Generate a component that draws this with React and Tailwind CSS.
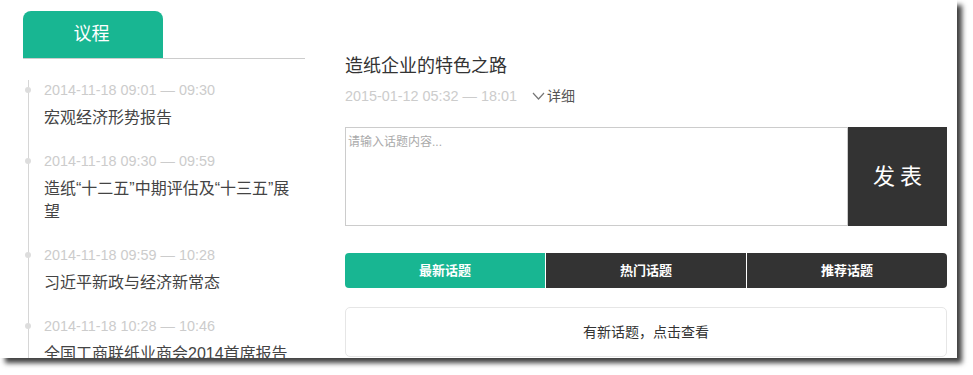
import React from "react";

const items = [
  { date: "2014-11-18 09:01 — 09:30", title: "宏观经济形势报告" },
  { date: "2014-11-18 09:30 — 09:59", title: "造纸“十二五”中期评估及“十三五”展望" },
  { date: "2014-11-18 09:59 — 10:28", title: "习近平新政与经济新常态" },
  { date: "2014-11-18 10:28 — 10:46", title: "全国工商联纸业商会2014首席报告" },
];

export default function App() {
  return (
    <div className="w-[973px] h-[375px] bg-white font-['Liberation_Sans','Noto_Sans_CJK_SC',sans-serif]">
      <div className="w-[957px] h-[358px] bg-white overflow-hidden flex shadow-[5px_5px_5px_rgba(0,0,0,0.75)]">
        {/* Left column */}
        <div className="ml-[23px] w-[282px] pt-[11px] shrink-0">
          <div className="border-b border-[#cccccc] h-[48px]">
            <div className="w-[140px] h-[47px] bg-[#18b692] rounded-t-[8px] flex items-center justify-center text-white text-[18px] pr-[3px]">
              议程
            </div>
          </div>
          <div className="relative mt-[21px] ml-[5px] border-l border-[#d6d6d6] pl-[15px] flex flex-col gap-[22px]">
            {items.map((it, i) => (
              <div key={i} className="relative">
                <span className="absolute left-[-19px] top-[7px] w-[6px] h-[6px] rounded-full bg-[#dddddd]" />
                <div className="text-[14.4px] leading-[20px] text-[#cccccc]">{it.date}</div>
                <div className="mt-[6px] w-[250px] text-[16px] leading-[23px] text-[#444444]">{it.title}</div>
              </div>
            ))}
          </div>
        </div>

        {/* Right column */}
        <div className="ml-[40px] w-[602px] pt-[54px] shrink-0">
          <div className="text-[18px] leading-[24px] text-[#333333]">造纸企业的特色之路</div>
          <div className="mt-[8px] flex items-center text-[14.4px] leading-[20px]">
            <span className="text-[#cccccc]">2015-01-12 05:32 — 18:01</span>
            <span className="ml-[15px] flex items-center text-[14px] text-[#555555]">
              <svg width="13" height="8" viewBox="0 0 13 8" className="mr-[2px]">
                <polyline points="1,1 6.5,7 12,1" fill="none" stroke="#777" strokeWidth="1.2" />
              </svg>
              详细
            </span>
          </div>
          <div className="mt-[21px] flex h-[99px]">
            <div className="flex-1 border border-[#cccccc] px-[2px] pt-[6px] text-[12px] leading-[16px] text-[#aaaaaa]">
              请输入话题内容...
            </div>
            <div className="w-[99px] bg-[#333333] flex items-center justify-center text-white text-[22px] tracking-[5px] pl-[5px]">
              发表
            </div>
          </div>
          <div className="mt-[27px] h-[35px] grid grid-cols-3 gap-px bg-white rounded-[4px] overflow-hidden text-white text-[13px] font-bold">
            <div className="bg-[#18b692] flex items-center justify-center">最新话题</div>
            <div className="bg-[#333333] flex items-center justify-center">热门话题</div>
            <div className="bg-[#333333] flex items-center justify-center">推荐话题</div>
          </div>
          <div className="mt-[19px] h-[50px] border border-[#e6e6e6] rounded-[5px] flex items-center justify-center text-[14px] text-[#333333]">
            有新话题，点击查看
          </div>
        </div>
      </div>
    </div>
  );
}
